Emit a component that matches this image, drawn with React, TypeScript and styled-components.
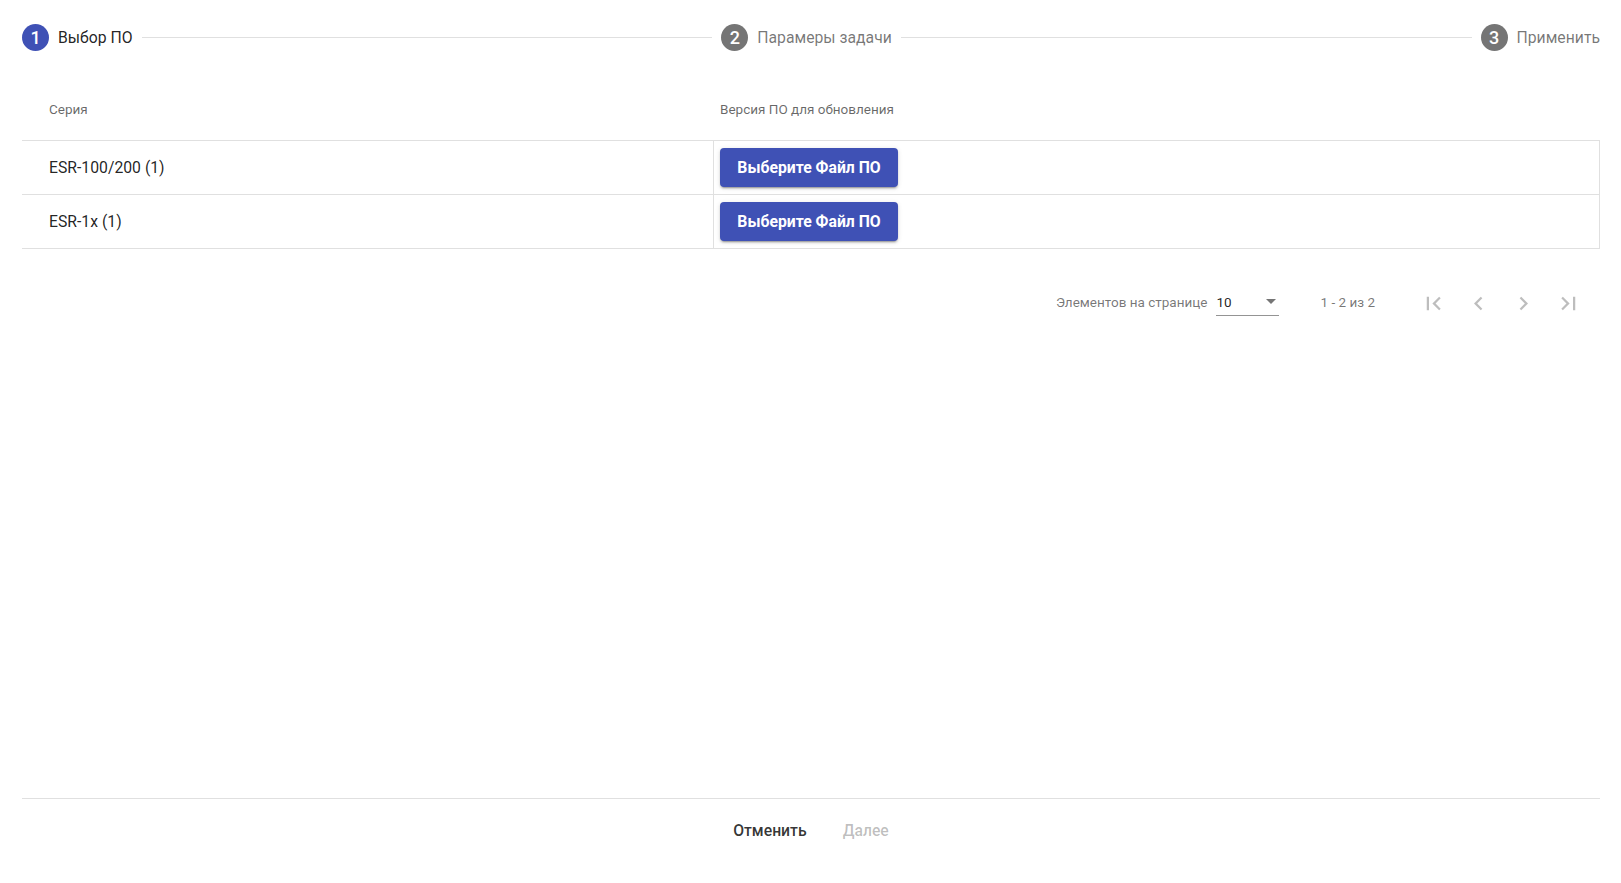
import React from "react";
import styled, { createGlobalStyle } from "styled-components";

const GlobalStyle = createGlobalStyle`
  html, body { margin: 0; padding: 0; background: #fff; }
  body { font-family: Roboto, "Noto Sans", "Liberation Sans", sans-serif; }
  * { box-sizing: border-box; }
`;

const Page = styled.div`
  height: 100vh;
  display: flex;
  flex-direction: column;
  padding: 0 21px 0 22px;
`;

const Content = styled.div`
  flex: 1;
`;

const Stepper = styled.div`
  height: 74px;
  display: flex;
  align-items: center;
`;

const Step = styled.div`
  display: flex;
  align-items: center;
  flex: none;
`;

const StepIcon = styled.div<{ $active?: boolean }>`
  width: 27px;
  height: 27px;
  border-radius: 50%;
  background: ${(p) => (p.$active ? "#3f51b5" : "#757575")};
  color: #fff;
  display: flex;
  align-items: center;
  justify-content: center;
  font-size: 18px;
  font-weight: 500;
  margin-right: 9px;
`;

const StepLabel = styled.div<{ $active?: boolean }>`
  font-size: 15.75px;
  font-weight: 400;
  color: ${(p) => (p.$active ? "rgba(0,0,0,0.87)" : "rgba(0,0,0,0.54)")};
`;

const StepLine = styled.div`
  flex: 1;
  height: 1px;
  background: rgba(0, 0, 0, 0.12);
  margin: 0 9px;
`;

const Table = styled.div`
  display: flex;
  flex-direction: column;
`;

const HeaderRow = styled.div`
  display: grid;
  grid-template-columns: 691px 1fr;
  height: 67px;
  padding-top: 3px;
  border-bottom: 1px solid #e0e0e0;
`;

const HeaderCell = styled.div<{ $pad: number }>`
  display: flex;
  align-items: center;
  padding-left: ${(p) => p.$pad}px;
  font-size: 13.5px;
  font-weight: 400;
  color: rgba(0, 0, 0, 0.6);
`;

const Row = styled.div`
  display: grid;
  grid-template-columns: 691px 1fr;
  height: 54px;
  border-bottom: 1px solid #e0e0e0;
`;

const NameCell = styled.div`
  display: flex;
  align-items: center;
  padding-left: 27px;
  font-size: 15.75px;
  color: rgba(0, 0, 0, 0.87);
`;

const ActionCell = styled.div`
  display: flex;
  align-items: center;
  padding-left: 6px;
  border-left: 1px solid #e0e0e0;
  border-right: 1px solid #e0e0e0;
`;

const RaisedButton = styled.button`
  height: 39px;
  width: 178px;
  border: none;
  border-radius: 4px;
  background: #3f51b5;
  color: #fff;
  font-family: inherit;
  font-size: 15.75px;
  font-weight: 700;
  cursor: pointer;
  box-shadow: 0 3px 1px -2px rgba(0, 0, 0, 0.2), 0 2px 2px 0 rgba(0, 0, 0, 0.14),
    0 1px 5px 0 rgba(0, 0, 0, 0.12);
`;

const Paginator = styled.div`
  margin-top: 21px;
  height: 63px;
  display: flex;
  align-items: center;
  justify-content: flex-end;
  padding-right: 9px;
  font-size: 13.5px;
  color: rgba(0, 0, 0, 0.54);
`;

const PageSizeLabel = styled.div`
  margin-right: 9px;
`;

const Select = styled.div`
  width: 63px;
  height: 24px;
  margin-top: 4px;
  padding-bottom: 3px;
  border-bottom: 1px solid rgba(0, 0, 0, 0.42);
  display: flex;
  align-items: center;
  justify-content: space-between;
  color: rgba(0, 0, 0, 0.87);
  line-height: 20px;
`;

const Arrow = styled.span`
  width: 0;
  height: 0;
  border-left: 5.5px solid transparent;
  border-right: 5.5px solid transparent;
  border-top: 5.5px solid rgba(0, 0, 0, 0.54);
  margin-right: 3px;
`;

const RangeLabel = styled.div`
  margin: 0 36px 0 41px;
`;

const IconButton = styled.button`
  width: 45px;
  height: 45px;
  margin-top: 3px;
  border: none;
  background: transparent;
  padding: 0;
  display: flex;
  align-items: center;
  justify-content: center;
  color: rgba(0, 0, 0, 0.26);
`;

const Footer = styled.div`
  border-top: 1px solid #e0e0e0;
  height: 64px;
  margin-bottom: 21px;
  display: flex;
  align-items: center;
  justify-content: center;
`;

const FlatButton = styled.button<{ $disabled?: boolean }>`
  height: 40px;
  padding: 0 18px;
  border: none;
  background: transparent;
  font-family: inherit;
  font-size: 15.75px;
  font-weight: 500;
  color: ${(p) => (p.$disabled ? "rgba(0,0,0,0.26)" : "rgba(0,0,0,0.8)")};
`;

const Icon = ({ d }: { d: string }) => (
  <svg width="27" height="27" viewBox="0 0 24 24" fill="currentColor">
    <path d={d} />
  </svg>
);

const rows = ["ESR-100/200 (1)", "ESR-1x (1)"];

export default function App() {
  return (
    <>
      <GlobalStyle />
      <Page>
        <Content>
          <Stepper>
            <Step>
              <StepIcon $active>1</StepIcon>
              <StepLabel $active>Выбор ПО</StepLabel>
            </Step>
            <StepLine />
            <Step>
              <StepIcon>2</StepIcon>
              <StepLabel>Парамеры задачи</StepLabel>
            </Step>
            <StepLine />
            <Step>
              <StepIcon>3</StepIcon>
              <StepLabel>Применить</StepLabel>
            </Step>
          </Stepper>
          <Table>
            <HeaderRow>
              <HeaderCell $pad={27}>Серия</HeaderCell>
              <HeaderCell $pad={7}>Версия ПО для обновления</HeaderCell>
            </HeaderRow>
            {rows.map((r) => (
              <Row key={r}>
                <NameCell>{r}</NameCell>
                <ActionCell>
                  <RaisedButton>Выберите Файл ПО</RaisedButton>
                </ActionCell>
              </Row>
            ))}
          </Table>
          <Paginator>
            <PageSizeLabel>Элементов на странице</PageSizeLabel>
            <Select>
              <span>10</span>
              <Arrow />
            </Select>
            <RangeLabel>1 - 2 из 2</RangeLabel>
            <IconButton>
              <Icon d="M18.41 16.59L13.82 12l4.59-4.59L17 6l-6 6 6 6zM6 6h2v12H6z" />
            </IconButton>
            <IconButton>
              <Icon d="M15.41 7.41L14 6l-6 6 6 6 1.41-1.41L10.83 12z" />
            </IconButton>
            <IconButton>
              <Icon d="M10 6L8.59 7.41 13.17 12l-4.58 4.59L10 18l6-6z" />
            </IconButton>
            <IconButton>
              <Icon d="M5.59 7.41L10.18 12l-4.59 4.59L7 18l6-6-6-6zM16 6h2v12h-2z" />
            </IconButton>
          </Paginator>
        </Content>
        <Footer>
          <FlatButton>Отменить</FlatButton>
          <FlatButton $disabled>Далее</FlatButton>
        </Footer>
      </Page>
    </>
  );
}
